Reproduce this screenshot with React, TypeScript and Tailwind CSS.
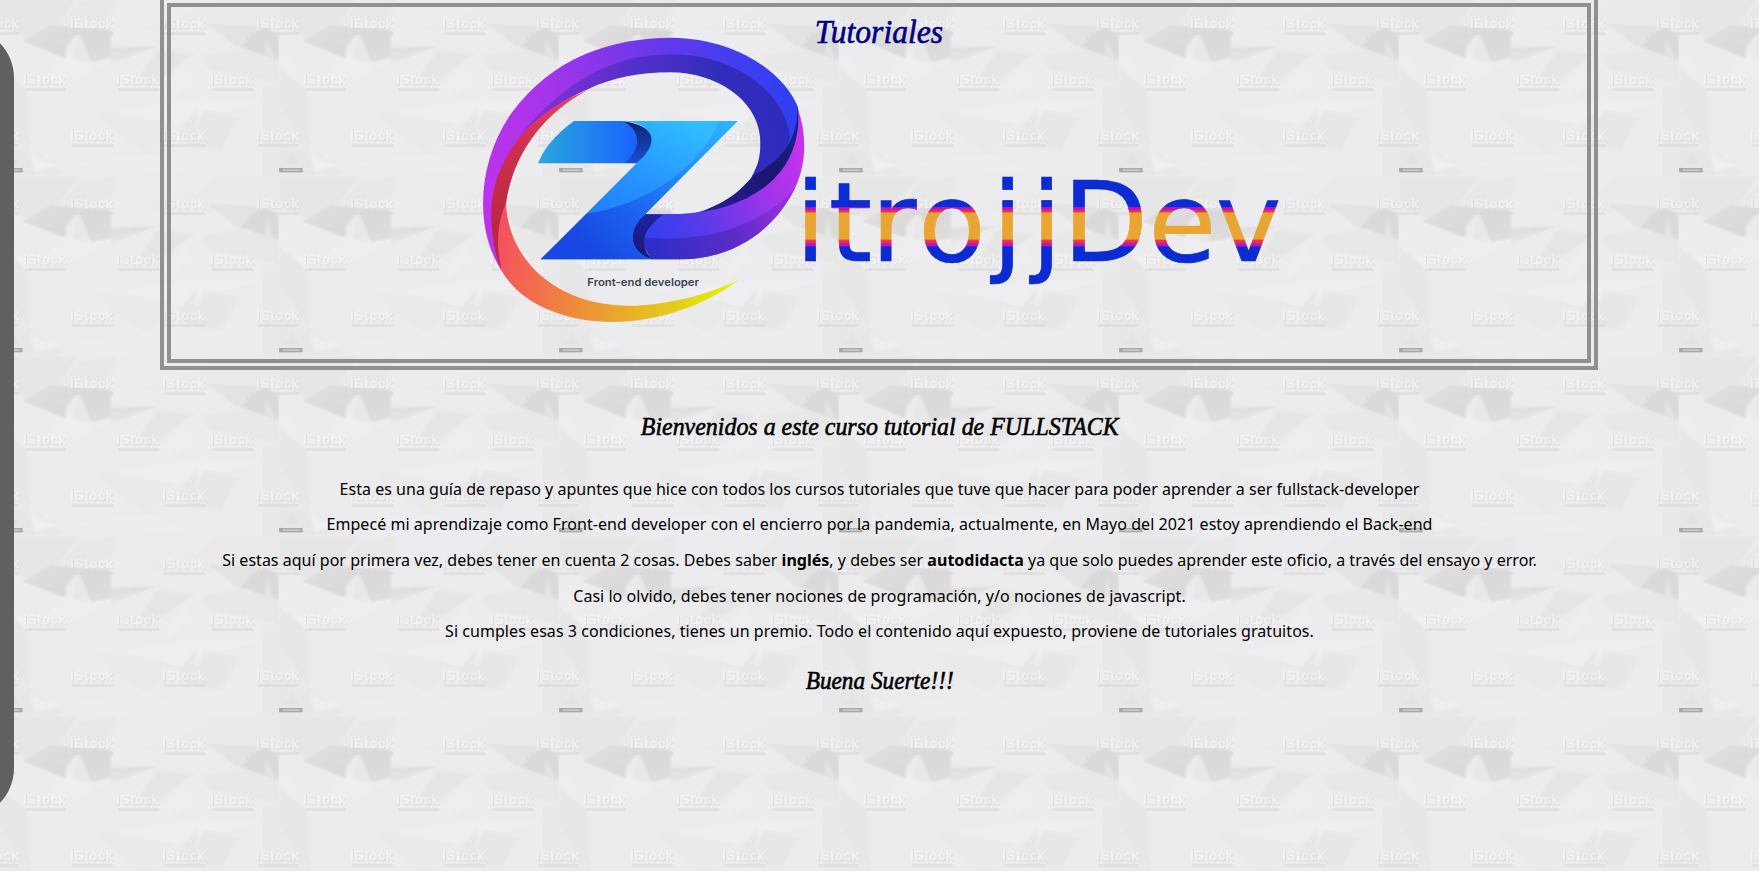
const marks: [number, number][] = [
  [-22, 32], [72, 32], [164, 32], [258, 32],
  [25, 88], [118, 88], [212, 88],
  [-22, 144], [72, 144], [164, 144], [258, 144],
];

function PaperBackground() {
  return (
    <svg className="absolute inset-0 h-full w-full" aria-hidden="true">
      <defs>
        <filter id="soft" x="-5%" y="-5%" width="110%" height="110%">
          <feGaussianBlur stdDeviation="1.3" />
        </filter>
        <filter id="softMark" x="-5%" y="-5%" width="110%" height="110%">
          <feGaussianBlur stdDeviation="0.5" />
        </filter>
        <linearGradient id="leftFacet" x1="0" x2="1" y1="0" y2="1">
          <stop offset="0" stopColor="#e0dfe0" />
          <stop offset="0.6" stopColor="#d9d6d7" />
          <stop offset="1" stopColor="#dedcdd" />
        </linearGradient>
        <linearGradient id="fadeDown" x1="0" x2="0" y1="0" y2="1">
          <stop offset="0" stopColor="#dddcdd" />
          <stop offset="1" stopColor="#e8e7e8" />
        </linearGradient>
        <pattern id="paper" x="-1" y="-4" width="280" height="180" patternUnits="userSpaceOnUse">
          <rect width="280" height="180" fill="#ecebed" />
          <g filter="url(#soft)" opacity="0.9">
            <path d="M0 0H80L60 28L28 42L0 30Z" fill="#e7e6e7" />
            <path d="M80 6L62 27L110 30L118 0Z" fill="#e9e8e9" />
            <path d="M140 34L205 12L215 0H280V40L200 34Z" fill="#ebeaeb" />
            <path d="M24 45L52 29L112 34V62L92 66L80 36L72 44L66 62Z" fill="url(#leftFacet)" />
            <path d="M66 64L68 44L72 64Z" fill="#efeeef" />
            <path d="M73 66L79 36L92 66Z" fill="#e9e8e8" />
            <path d="M46 80L64 61L90 67L118 62L90 76L60 88Z" fill="#efeef0" />
            <path d="M112 52L158 50L112 68Z" fill="url(#fadeDown)" />
            <path d="M158 54L196 58L176 72L148 92L142 78Z" fill="#e6e5e6" />
            <path d="M182 72L198 82L170 100L164 92Z" fill="#efeef0" />
            <path d="M208 28L262 30L238 51Z" fill="#e3e2e3" />
            <path d="M240 52L252 38L266 31L280 40V65L262 60L246 52Z" fill="#dad8d9" />
            <path d="M266 59L268 44L275 62Z" fill="#e4e3e4" />
            <path d="M200 60L246 53L280 64V88L210 74Z" fill="#e9e8e9" />
            <path d="M0 42L30 94L0 106Z" fill="#efeef1" />
            <path d="M0 70L28 94L30 150L0 110Z" fill="#e8e7e8" />
            <path d="M120 115L190 106L262 104L215 118L176 128Z" fill="#f0eff1" />
            <path d="M180 133L198 113L196 132L206 114L240 122L222 154L186 150Z" fill="#e8e7e8" />
            <path d="M96 116L176 128L150 158L120 140Z" fill="#ebeaeb" />
            <path d="M0 150L40 158L66 176L60 180H0Z" fill="#e9e8e9" />
            <path d="M30 158L60 170L36 176Z" fill="#f0eff1" />
            <path d="M80 166L148 158L190 174L100 180Z" fill="#eeedef" />
          </g>
          <rect x="0" y="104" width="32" height="76" fill="#dedddf" opacity="0.12" />
          <rect x="264" y="90" width="16" height="90" fill="#dedddf" opacity="0.18" />
          <path d="M6 168L13 157L20 168Z" fill="#e4e3e4" />
          <g filter="url(#softMark)" opacity="0.68">
            {marks.map(([x, y]) => (
              <g key={`${x}-${y}`}>
                <text x={x + 0.6} y={y + 1.2} fontFamily="Liberation Sans" fontSize="13" textLength="42" fill="none" stroke="#d0cfd1" strokeWidth="0.9" opacity="0.75">iStock</text>
                <text x={x - 0.5} y={y} fontFamily="Liberation Sans" fontSize="13" textLength="42" fill="#ecebed" stroke="#fafafb" strokeWidth="0.7" opacity="0.9">iStock</text>
                <rect x={x + 1} y={y + 4} width="41" height="3" fill="#d8d7d9" opacity="0.75" />
              </g>
            ))}
          </g>
          <rect x="0" y="172" width="23.5" height="4.3" fill="#a9a8a9" />
          <rect x="4" y="173.3" width="17" height="1.6" fill="#cfcecf" />
        </pattern>
      </defs>
      <rect width="100%" height="100%" fill="url(#paper)" />
    </svg>
  );
}

function Logo() {
  return (
    <svg viewBox="0 0 2460 930" className="ml-[2px] h-[310px] w-[820px] shrink-0" role="img" aria-label="ZitrojjDev">
      <defs>
        <linearGradient id="ring" gradientUnits="userSpaceOnUse" x1="60" y1="500" x2="980" y2="250">
          <stop offset="0" stopColor="#bb33ea" />
          <stop offset="0.25" stopColor="#a634ea" />
          <stop offset="0.6" stopColor="#6a38ea" />
          <stop offset="1" stopColor="#2c40f2" />
        </linearGradient>
        <linearGradient id="ringDark" gradientUnits="userSpaceOnUse" x1="150" y1="300" x2="900" y2="250">
          <stop offset="0" stopColor="#8c2fd8" />
          <stop offset="0.45" stopColor="#5530cc" />
          <stop offset="0.8" stopColor="#332dbb" />
          <stop offset="1" stopColor="#2f2cbc" />
        </linearGradient>
        <linearGradient id="tail" gradientUnits="userSpaceOnUse" x1="990" y1="380" x2="540" y2="640">
          <stop offset="0" stopColor="#c631ec" />
          <stop offset="0.3" stopColor="#a034ea" />
          <stop offset="0.7" stopColor="#5a3aea" />
          <stop offset="1" stopColor="#3440ee" />
        </linearGradient>
        <linearGradient id="tailDark" gradientUnits="userSpaceOnUse" x1="960" y1="520" x2="530" y2="690">
          <stop offset="0" stopColor="#9a30dc" />
          <stop offset="0.45" stopColor="#5c2bc8" />
          <stop offset="1" stopColor="#2a2fc8" />
        </linearGradient>
        <linearGradient id="navy" gradientUnits="userSpaceOnUse" x1="985" y1="300" x2="680" y2="570">
          <stop offset="0" stopColor="#0f2a86" />
          <stop offset="0.4" stopColor="#1b1470" />
          <stop offset="1" stopColor="#2b1f98" />
        </linearGradient>
        <linearGradient id="fold" gradientUnits="userSpaceOnUse" x1="0" y1="582" x2="0" y2="718">
          <stop offset="0" stopColor="#2420a4" />
          <stop offset="0.6" stopColor="#1a1c84" />
          <stop offset="1" stopColor="#141a70" />
        </linearGradient>
        <linearGradient id="redDark" gradientUnits="userSpaceOnUse" x1="330" y1="210" x2="90" y2="640">
          <stop offset="0" stopColor="#ee4060" />
          <stop offset="0.5" stopColor="#d02e4e" />
          <stop offset="1" stopColor="#b8283e" />
        </linearGradient>
        <linearGradient id="sun" gradientUnits="userSpaceOnUse" x1="90" y1="640" x2="800" y2="800">
          <stop offset="0" stopColor="#f4505e" />
          <stop offset="0.2" stopColor="#f2704c" />
          <stop offset="0.5" stopColor="#eaa030" />
          <stop offset="0.75" stopColor="#e6c81c" />
          <stop offset="1" stopColor="#dff800" />
        </linearGradient>
        <linearGradient id="zMain" gradientUnits="userSpaceOnUse" x1="640" y1="303" x2="440" y2="720">
          <stop offset="0" stopColor="#30bcff" />
          <stop offset="0.5" stopColor="#2690ff" />
          <stop offset="1" stopColor="#1e74fa" />
        </linearGradient>
        <linearGradient id="zLow" gradientUnits="userSpaceOnUse" x1="760" y1="303" x2="400" y2="720">
          <stop offset="0" stopColor="#2cb4ff" />
          <stop offset="0.4" stopColor="#2286fa" />
          <stop offset="0.7" stopColor="#1c62f0" />
          <stop offset="1" stopColor="#1848e2" />
        </linearGradient>
        <linearGradient id="zArm" x1="0" x2="1">
          <stop offset="0" stopColor="#28a8dc" />
          <stop offset="1" stopColor="#1a60ff" />
        </linearGradient>
        <linearGradient id="zFold" x1="0" x2="0" y1="0" y2="1">
          <stop offset="0" stopColor="#0a246e" />
          <stop offset="1" stopColor="#1a50d4" />
        </linearGradient>
        <linearGradient id="bands" gradientUnits="userSpaceOnUse" x1="0" y1="540" x2="0" y2="780">
          <stop offset="0" stopColor="#0a2cd2" />
          <stop offset="0.085" stopColor="#0a2cd2" />
          <stop offset="0.095" stopColor="#b414c8" />
          <stop offset="0.125" stopColor="#c816b0" />
          <stop offset="0.13" stopColor="#e8285a" />
          <stop offset="0.152" stopColor="#e8403c" />
          <stop offset="0.16" stopColor="#e8a532" />
          <stop offset="0.49" stopColor="#e8a532" />
          <stop offset="0.5" stopColor="#e8403c" />
          <stop offset="0.535" stopColor="#e8285a" />
          <stop offset="0.545" stopColor="#c816b0" />
          <stop offset="0.575" stopColor="#b414c8" />
          <stop offset="0.585" stopColor="#0a2cd2" />
          <stop offset="1" stopColor="#0a2cd2" />
        </linearGradient>
      </defs>
      <path fill="url(#ring)" d="M95 752C14 630 19 430 124 280C247 110 430 53 605 53C800 55 945 160 984 262L987 330L955 400C930 230 790 125 600 125C430 125 300 210 200 310C100 420 68 530 90 700Z" />
      <path fill="url(#ringDark)" d="M150 345C290 180 430 103 605 103C800 103 945 220 960 350L945 410L845 470C868 430 873 400 870 350C860 240 740 157 600 157C510 157 430 172 355 207C290 235 210 285 150 345Z" />
      <path fill="url(#redDark)" d="M355 209C290 235 230 270 178 320C110 390 62 480 64 590C66 660 78 710 95 752C96 690 98 620 108 550C130 400 220 280 355 209Z" />
      <path fill="url(#sun)" d="M108 550C115 720 260 865 500 857C620 850 720 820 806 780C700 860 560 905 430 906C280 905 150 850 95 752C78 680 80 610 108 550Z" />
      <path fill="url(#navy)" d="M982 262C1000 330 1000 430 900 505C820 560 740 580 675 580C740 560 800 530 850 465C920 430 985 370 982 262Z" />
      <path fill="url(#tail)" d="M984 268C1010 340 1010 430 977 500C920 620 800 718 630 718H545L505 650L540 582H630C830 575 1000 470 984 268Z" />
      <path fill="url(#tailDark)" d="M500 648C700 680 890 610 977 500C920 620 800 718 630 718H545Z" />
      <path fill="url(#fold)" d="M526 582L578 584C530 620 495 670 548 718C470 705 460 620 526 582Z" />
      <path fill="url(#zMain)" d="M456 303H803L526 582C470 630 475 695 545 718H212L500 430C560 370 560 310 456 303Z" />
      <path fill="url(#zLow)" d="M746 303H803L526 582C470 630 475 695 545 718H212L350 581C520 555 690 450 746 303Z" />
      <path fill="url(#zArm)" d="M312 303H456C505 320 520 370 500 430H204C220 390 250 348 312 303Z" />
      <path fill="url(#zFold)" d="M456 303C560 315 570 370 500 430L463 429C520 385 510 325 456 303Z" />
      <text x="352" y="799" fontFamily="Inter, sans-serif" fontWeight="600" fontSize="32" textLength="335" lengthAdjust="spacingAndGlyphs" fill="#3c4454">Front-end developer</text>
      <text x="976 1076 1203 1344 1567 1684 1778 2035 2237" y="723" fontFamily="DejaVu Sans, sans-serif" fontSize="333" fill="url(#bands)" stroke="url(#bands)" strokeWidth="2">itrojjDev</text>
    </svg>
  );
}

const title = "font-['Liberation_Serif',serif] italic whitespace-nowrap [-webkit-text-stroke:0.6px_currentColor]";

export default function App() {
  return (
    <div className="relative h-[871px] w-full overflow-hidden">
      <PaperBackground />
      <aside className="absolute top-[28px] -left-[86px] h-[790px] w-[100px] rounded-[50px] bg-[#606060]" />
      <main className="relative flex flex-col items-center text-black">
        <header className="-mt-1 mr-px flex h-[374px] w-[1438px] flex-col items-center border-[11px] border-double border-[#909090]">
          <h1 className={`${title} mt-[5px] h-[8px] scale-x-[0.93] text-[34px] leading-[40px] text-[#000080]`}>Tutoriales</h1>
          <Logo />
        </header>
        <h2 className={`${title} mt-[41px] scale-x-[0.92] text-[26px] leading-[32px]`}>Bienvenidos a este curso tutorial de FULLSTACK</h2>
        <section className="mt-[28.6px] flex flex-col items-center font-['Noto_Sans',sans-serif] text-[16px] leading-[35.7px] whitespace-nowrap">
          <p className="tracking-[0.025px]">Esta es una guía de repaso y apuntes que hice con todos los cursos tutoriales que tuve que hacer para poder aprender a ser fullstack-developer</p>
          <p className="tracking-[0.048px]">Empecé mi aprendizaje como Front-end developer con el encierro por la pandemia, actualmente, en Mayo del 2021 estoy aprendiendo el Back-end</p>
          <p className="tracking-[0.016px]">Si estas aquí por primera vez, debes tener en cuenta 2 cosas. Debes saber <b>inglés</b>, y debes ser <b>autodidacta</b> ya que solo puedes aprender este oficio, a través del ensayo y error.</p>
          <p className="tracking-[0.037px]">Casi lo olvido, debes tener nociones de programación, y/o nociones de javascript.</p>
          <p className="tracking-[0.055px]">Si cumples esas 3 condiciones, tienes un premio. Todo el contenido aquí expuesto, proviene de tutoriales gratuitos.</p>
        </section>
        <h2 className={`${title} mt-[15px] scale-x-[0.895] text-[26px] leading-[32px]`}>Buena Suerte!!!</h2>
      </main>
    </div>
  );
}
